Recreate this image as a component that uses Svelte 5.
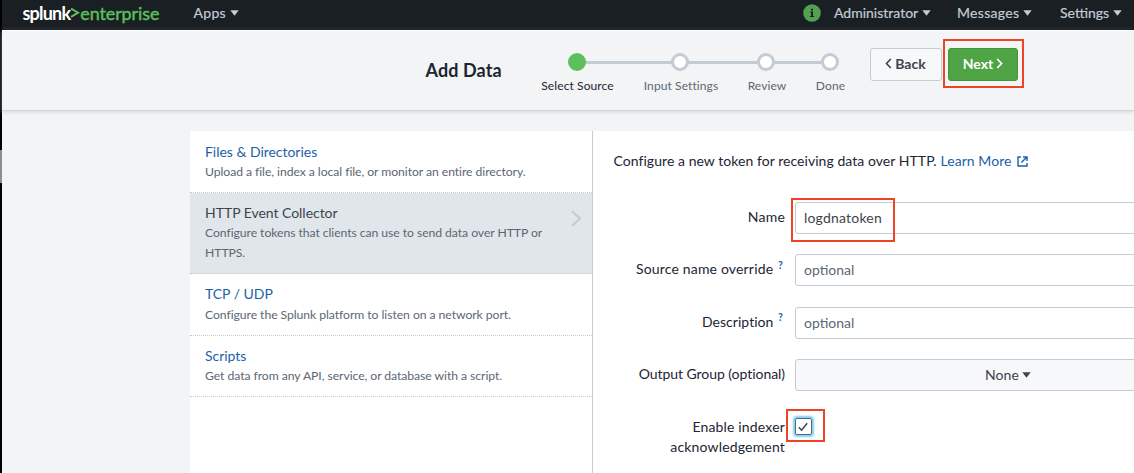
<script>
  const menus = [
    { label: 'Administrator', cls: 'admin' },
    { label: 'Messages', cls: 'messages' },
    { label: 'Settings', cls: 'settings' },
  ];
  const steps = [
    { label: 'Select Source', active: true },
    { label: 'Input Settings' },
    { label: 'Review' },
    { label: 'Done' },
  ];
  const sources = [
    { title: 'Files & Directories', text: 'Upload a file, index a local file, or monitor an entire directory.' },
    { title: 'HTTP Event Collector', text: 'Configure tokens that clients can use to send data over HTTP or HTTPS.', selected: true },
    { title: 'TCP / UDP', text: 'Configure the Splunk platform to listen on a network port.' },
    { title: 'Scripts', text: 'Get data from any API, service, or database with a script.' },
  ];
</script>

{#snippet caret()}
  <svg class="caret" width="9" height="6" viewBox="0 0 9 6"><path d="M.3.2h8.4L4.5 5.8z" fill="currentColor" /></svg>
{/snippet}

<div class="frame">
  <div class="edge"><span></span></div>
  <div class="page">
    <nav>
      <div class="logo"><b>splunk</b><svg width="10" height="14" viewBox="0 0 10 14"><path d="M1 2.6 8.2 6.7 1 10.8" fill="none" stroke="#5cc05c" stroke-width="1.9" /></svg><span>enterprise</span></div>
      <div class="menu apps"><span>Apps</span>{@render caret()}</div>
      <div class="info">
        <svg width="18" height="18" viewBox="0 0 18 18"><circle cx="9" cy="9" r="8.8" fill="#53a051" /><path d="M8 4.7h2v1.7H8zM7.3 7.6H10v4.3h1.1v1.1H7.1v-1.1h1.1V8.7h-.9z" fill="#1a1c20" /></svg>
      </div>
      {#each menus as m}
        <div class="menu {m.cls}"><span>{m.label}</span>{@render caret()}</div>
      {/each}
    </nav>

    <header>
      <h1>Add Data</h1>
      <ol>
        {#each steps as s}
          <li class:active={s.active}><i></i><span>{s.label}</span></li>
        {/each}
      </ol>
      <button class="back"><svg width="7" height="11" viewBox="0 0 7 11"><path d="M5.8 1 1.5 5.5l4.3 4.5" fill="none" stroke="currentColor" stroke-width="1.6" /></svg><span>Back</span></button>
      <div class="mark next-mark">
        <button class="next"><span>Next</span><svg width="7" height="11" viewBox="0 0 7 11"><path d="M1.2 1 5.5 5.5 1.2 10" fill="none" stroke="currentColor" stroke-width="1.8" /></svg></button>
      </div>
    </header>

    <main>
      <ul>
        {#each sources as s}
          <li class:selected={s.selected}>
            <div class="title">{s.title}</div>
            <p>{s.text}</p>
            {#if s.selected}
              <svg class="chevron" width="11" height="17" viewBox="0 0 11 17"><path d="M1.2 1.2 9 8.5l-7.8 7.3" fill="none" stroke="#c3cbd4" stroke-width="2.2" /></svg>
            {/if}
          </li>
        {/each}
      </ul>
      <section>
        <p class="intro"><span>Configure a new token for receiving data over HTTP.</span><a href="#more">Learn More</a><svg width="11" height="11" viewBox="0 0 11 11"><path d="M4 1H1v9h9V7M6 1h4v4M10 1 4.4 6.6" fill="none" stroke="#1e5fa8" stroke-width="1.4" /></svg></p>
        <div class="row">
          <span class="label name">Name</span>
          <div class="field value">logdnatoken<div class="mark name-mark"></div></div>
        </div>
        <div class="row">
          <span class="label src">Source name override <sup>?</sup></span>
          <div class="field">optional</div>
        </div>
        <div class="row">
          <span class="label desc">Description <sup>?</sup></span>
          <div class="field">optional</div>
        </div>
        <div class="row">
          <span class="label group">Output Group (optional)</span>
          <div class="field select"><span>None</span>{@render caret()}</div>
        </div>
        <div class="row last">
          <span class="label ack">Enable indexer<br />acknowledgement</span>
          <div class="check">
            <svg width="10" height="10" viewBox="0 0 10 10"><path d="M.8 5.2 3.6 8.2 9.2 1.3" fill="none" stroke="#3c444d" stroke-width="1.5" /></svg>
            <div class="mark check-mark"></div>
          </div>
        </div>
      </section>
    </main>
  </div>
</div>

<style>
  * { box-sizing: border-box; margin: 0; padding: 0; }
  :global(body) { overflow: hidden; background: #f2f4f5; }
  .frame { display: flex; width: 1134px; height: 473px; overflow: hidden; font: 14px/20.4px Lato, sans-serif; color: #1d2533; white-space: nowrap; }
  .edge { width: 2px; flex: none; background: #000; padding-top: 150px; }
  .edge span { display: block; height: 33px; background: #8e8e8e; }
  .page { flex: 1; min-width: 0; background: #f2f4f5; display: flex; flex-direction: column; }
  nav { height: 30px; flex: none; background: #1a1f24; border-bottom: 1px solid #000; display: flex; align-items: center; padding: 0 11px 3px 20.5px; color: #c3cbd4; }
  .logo { display: flex; align-items: center; width: 171px; font-size: 18px; color: #5cc05c; }
  .logo b { color: #fff; font-weight: 700; letter-spacing: -0.8px; }
  .logo span { font-weight: 400; letter-spacing: -0.1px; -webkit-text-stroke: .4px #5cc05c; }
  .menu { display: flex; align-items: center; gap: 4px; letter-spacing: .2px; -webkit-text-stroke: .2px; }
  .apps { letter-spacing: .3px; }
  .info { margin-left: auto; display: flex; width: 31px; }
  .admin { width: 123px; letter-spacing: 0; }
  .messages { width: 103px; letter-spacing: .3px; }
  .settings { width: 63px; letter-spacing: 0; }
  header { height: 81px; flex: none; display: flex; border-bottom: 1px solid #cfd6de; box-shadow: 0 1px 4px #c3cbd4aa; padding-left: 423.5px; border-top: 1px solid #fff; }
  h1 { font: 700 18px/24px Lato, sans-serif; letter-spacing: .1px; width: 99.5px; padding-top: 27px; }
  ol { list-style: none; display: grid; grid-template-columns: 103px 104px 68px 59px; padding-top: 22px; width: 334px; font-size: 12px; letter-spacing: .1px; color: #5c6773; }
  ol li { position: relative; display: flex; flex-direction: column; align-items: center; gap: 5px; }
  ol li span { padding-left: 2px; }
  ol li i { width: 18px; height: 18px; border: 3px solid #c3cbd4; border-radius: 50%; background: #fff; z-index: 1; }
  ol li.active i { background: #5cc05c; border-color: #5cc05c; }
  ol li.active { color: #1d2533; }
  ol li:not(:last-child)::after { content: ''; position: absolute; left: 50%; top: 8px; width: 100%; height: 3px; background: #c3cbd4; }
  button { display: flex; align-items: center; justify-content: center; border-radius: 3px; font: 700 14px/20px Lato, sans-serif; height: 33px; padding-bottom: 2px; }
  .back { width: 72px; margin: 17px 0 0 11px; gap: 3px; border: 1px solid #c3cbd4; background: #f7f8fa; color: #3c444d; flex: none; padding-right: 1px; }
  .mark { border: 2px solid #eb4526; }
  .next-mark { margin: 8px 0 0 1px; width: 81px; height: 49px; padding: 7px 4px 5px 3px; flex: none; }
  .next { width: 70px; background: #4fa445; border: 1px solid #459240; color: #fff; gap: 3px; }
  main { display: flex; flex: 1; margin: 20px 0 0 188px; background: #fff; }
  ul { list-style: none; width: 403px; flex: none; border-right: 1px solid #c3cbd4; padding-top: .6px; }
  ul li { position: relative; padding: 10px 40px 10px 15px; border-bottom: 1px dotted #c3cbd4; }
  ul .title { color: #1e5fa8; letter-spacing: -.03px; line-height: 20.4px; }
  ul p { font-size: 12.2px; line-height: 20px; letter-spacing: -.06px; color: #5c6773; white-space: normal; }
  ul li.selected { background: #e1e6eb; }
  .selected .title { color: #3c444d; }
  .chevron { position: absolute; right: 10px; top: 17px; }
  section { flex: 1; min-width: 0; padding: 20px 0 0 20.5px; }
  .intro { display: flex; align-items: center; height: 20px; margin-bottom: 31px; letter-spacing: .05px; }
  .intro a { color: #1e5fa8; text-decoration: none; margin: 0 5px 0 4px; }
  .row { display: flex; height: 52.4px; }
  .label { width: 171.5px; text-align: right; padding-top: 5px; flex: none; }
  .name { letter-spacing: .2px; }
  .src { letter-spacing: .17px; }
  .desc { letter-spacing: .05px; }
  .group { letter-spacing: -.05px; }
  .ack { letter-spacing: .17px; }
  sup { color: #1e5fa8; font-size: 10.5px; font-weight: 700; line-height: 0; vertical-align: 5.5px; margin: 0 2px 0 1px; }
  .field { position: relative; flex: none; margin-left: 10px; width: 426px; height: 32px; border: 1px solid #c3cbd4; border-radius: 3px; padding: 5px 8px; color: #5c6773; }
  .value { color: #3c444d; letter-spacing: .2px; }
  .select { display: flex; align-items: center; justify-content: center; gap: 3px; background: #f7f8fa; color: #3c444d; letter-spacing: .1px; }
  .name-mark { position: absolute; left: -5px; top: -5px; width: 104px; height: 44px; }
  .check { position: relative; width: 17px; height: 17px; margin: 6.5px 0 0 9.5px; display: flex; align-items: center; justify-content: center; border: 1px solid #5c6773; border-radius: 2px; box-shadow: 0 0 2px 2px #7fd0f7; }
  .check-mark { position: absolute; left: -10px; top: -10px; width: 39px; height: 33px; }
</style>
